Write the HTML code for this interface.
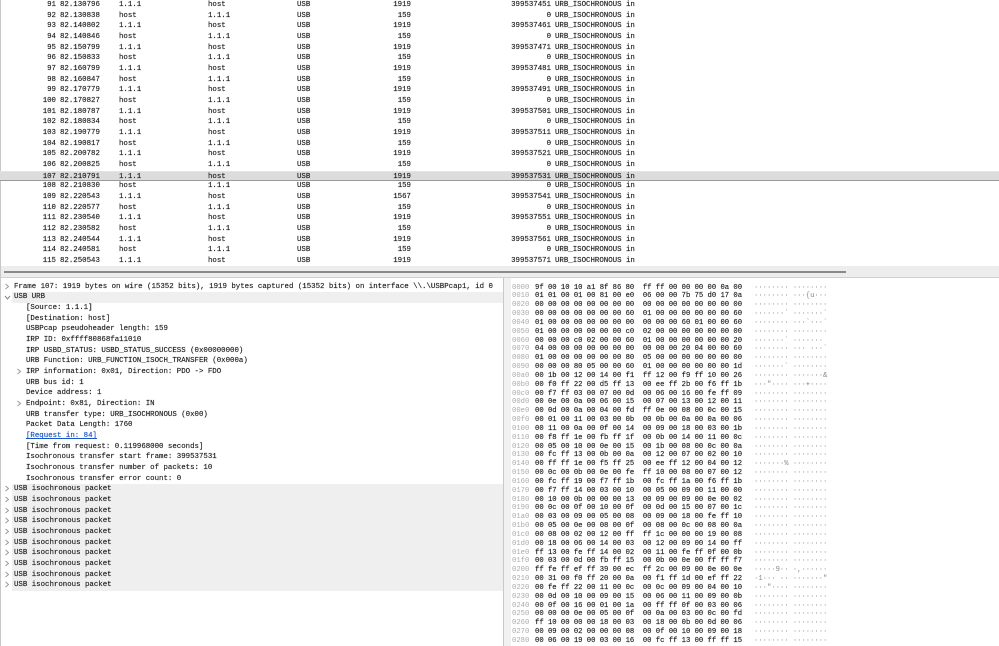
<!DOCTYPE html>
<html><head><meta charset="utf-8"><style>
body{margin:0;width:999px;height:646px;overflow:hidden;background:#fff;position:relative;font-family:"Liberation Mono",monospace;color:#111;-webkit-text-stroke:0.15px #333}
.r{position:absolute;left:0;width:999px;height:10.67px;font-size:7.4px;line-height:10.67px;white-space:pre}
.r span{position:absolute;top:0}
.sel{background:#dcdcdc;border-top:1px solid #e4e4e4;border-bottom:1px solid #9a9a9a;box-sizing:border-box}
.d{position:absolute;left:0;width:503px;height:10.67px;font-size:7.4px;line-height:10.67px;white-space:pre}
.d .t{position:absolute;top:0}
.g{background:#efefef}
.h{position:absolute;left:504px;height:8.83px;font-size:7.2px;line-height:8.83px;white-space:pre}
.h .o{position:absolute;left:8px;color:#aaa;-webkit-text-stroke:0}
.h .b{position:absolute;left:31px}
.h .a{position:absolute;left:250px;color:#888;-webkit-text-stroke:0}
.chev{position:absolute;top:1px;width:6px;height:7px;display:block}
</style></head><body>
<div style="position:absolute;left:0;top:0;width:1px;height:646px;background:#c8c8c8"></div>
<div style="position:absolute;left:1px;top:266px;width:998px;height:11px;background:#ededed"></div>
<div style="position:absolute;left:4px;top:271px;width:842px;height:2px;background:#8a8a8a"></div>
<div style="position:absolute;left:0;top:277px;width:999px;height:1px;background:#d0d0d0"></div>
<div style="position:absolute;left:503px;top:278px;width:1px;height:368px;background:#c8c8c8"></div>
<div style="position:absolute;left:504px;top:278px;width:7px;height:368px;background:#f1f1f1"></div>

<div class="r" style="top:0px"><span style="right:943px">91</span><span style="left:60px">82.130796</span><span style="left:119px">1.1.1</span><span style="left:208px">host</span><span style="left:297px">USB</span><span style="right:588px">1919</span><span style="right:448px">399537451</span><span style="left:555px">URB_ISOCHRONOUS in</span></div>
<div class="r" style="top:10.67px"><span style="right:943px">92</span><span style="left:60px">82.130838</span><span style="left:119px">host</span><span style="left:208px">1.1.1</span><span style="left:297px">USB</span><span style="right:588px">159</span><span style="right:448px">0</span><span style="left:555px">URB_ISOCHRONOUS in</span></div>
<div class="r" style="top:21.34px"><span style="right:943px">93</span><span style="left:60px">82.140802</span><span style="left:119px">1.1.1</span><span style="left:208px">host</span><span style="left:297px">USB</span><span style="right:588px">1919</span><span style="right:448px">399537461</span><span style="left:555px">URB_ISOCHRONOUS in</span></div>
<div class="r" style="top:32.01px"><span style="right:943px">94</span><span style="left:60px">82.140846</span><span style="left:119px">host</span><span style="left:208px">1.1.1</span><span style="left:297px">USB</span><span style="right:588px">159</span><span style="right:448px">0</span><span style="left:555px">URB_ISOCHRONOUS in</span></div>
<div class="r" style="top:42.68px"><span style="right:943px">95</span><span style="left:60px">82.150799</span><span style="left:119px">1.1.1</span><span style="left:208px">host</span><span style="left:297px">USB</span><span style="right:588px">1919</span><span style="right:448px">399537471</span><span style="left:555px">URB_ISOCHRONOUS in</span></div>
<div class="r" style="top:53.35px"><span style="right:943px">96</span><span style="left:60px">82.150833</span><span style="left:119px">host</span><span style="left:208px">1.1.1</span><span style="left:297px">USB</span><span style="right:588px">159</span><span style="right:448px">0</span><span style="left:555px">URB_ISOCHRONOUS in</span></div>
<div class="r" style="top:64.02px"><span style="right:943px">97</span><span style="left:60px">82.160799</span><span style="left:119px">1.1.1</span><span style="left:208px">host</span><span style="left:297px">USB</span><span style="right:588px">1919</span><span style="right:448px">399537481</span><span style="left:555px">URB_ISOCHRONOUS in</span></div>
<div class="r" style="top:74.69px"><span style="right:943px">98</span><span style="left:60px">82.160847</span><span style="left:119px">host</span><span style="left:208px">1.1.1</span><span style="left:297px">USB</span><span style="right:588px">159</span><span style="right:448px">0</span><span style="left:555px">URB_ISOCHRONOUS in</span></div>
<div class="r" style="top:85.36px"><span style="right:943px">99</span><span style="left:60px">82.170779</span><span style="left:119px">1.1.1</span><span style="left:208px">host</span><span style="left:297px">USB</span><span style="right:588px">1919</span><span style="right:448px">399537491</span><span style="left:555px">URB_ISOCHRONOUS in</span></div>
<div class="r" style="top:96.03px"><span style="right:943px">100</span><span style="left:60px">82.170827</span><span style="left:119px">host</span><span style="left:208px">1.1.1</span><span style="left:297px">USB</span><span style="right:588px">159</span><span style="right:448px">0</span><span style="left:555px">URB_ISOCHRONOUS in</span></div>
<div class="r" style="top:106.7px"><span style="right:943px">101</span><span style="left:60px">82.180787</span><span style="left:119px">1.1.1</span><span style="left:208px">host</span><span style="left:297px">USB</span><span style="right:588px">1919</span><span style="right:448px">399537501</span><span style="left:555px">URB_ISOCHRONOUS in</span></div>
<div class="r" style="top:117.37px"><span style="right:943px">102</span><span style="left:60px">82.180834</span><span style="left:119px">host</span><span style="left:208px">1.1.1</span><span style="left:297px">USB</span><span style="right:588px">159</span><span style="right:448px">0</span><span style="left:555px">URB_ISOCHRONOUS in</span></div>
<div class="r" style="top:128.04px"><span style="right:943px">103</span><span style="left:60px">82.190779</span><span style="left:119px">1.1.1</span><span style="left:208px">host</span><span style="left:297px">USB</span><span style="right:588px">1919</span><span style="right:448px">399537511</span><span style="left:555px">URB_ISOCHRONOUS in</span></div>
<div class="r" style="top:138.71px"><span style="right:943px">104</span><span style="left:60px">82.190817</span><span style="left:119px">host</span><span style="left:208px">1.1.1</span><span style="left:297px">USB</span><span style="right:588px">159</span><span style="right:448px">0</span><span style="left:555px">URB_ISOCHRONOUS in</span></div>
<div class="r" style="top:149.38px"><span style="right:943px">105</span><span style="left:60px">82.200782</span><span style="left:119px">1.1.1</span><span style="left:208px">host</span><span style="left:297px">USB</span><span style="right:588px">1919</span><span style="right:448px">399537521</span><span style="left:555px">URB_ISOCHRONOUS in</span></div>
<div class="r" style="top:160.05px"><span style="right:943px">106</span><span style="left:60px">82.200825</span><span style="left:119px">host</span><span style="left:208px">1.1.1</span><span style="left:297px">USB</span><span style="right:588px">159</span><span style="right:448px">0</span><span style="left:555px">URB_ISOCHRONOUS in</span></div>
<div class="r sel" style="top:170.72px"><span style="right:943px">107</span><span style="left:60px">82.210791</span><span style="left:119px">1.1.1</span><span style="left:208px">host</span><span style="left:297px">USB</span><span style="right:588px">1919</span><span style="right:448px">399537531</span><span style="left:555px">URB_ISOCHRONOUS in</span></div>
<div class="r" style="top:181.39px"><span style="right:943px">108</span><span style="left:60px">82.210830</span><span style="left:119px">host</span><span style="left:208px">1.1.1</span><span style="left:297px">USB</span><span style="right:588px">159</span><span style="right:448px">0</span><span style="left:555px">URB_ISOCHRONOUS in</span></div>
<div class="r" style="top:192.06px"><span style="right:943px">109</span><span style="left:60px">82.220543</span><span style="left:119px">1.1.1</span><span style="left:208px">host</span><span style="left:297px">USB</span><span style="right:588px">1567</span><span style="right:448px">399537541</span><span style="left:555px">URB_ISOCHRONOUS in</span></div>
<div class="r" style="top:202.73px"><span style="right:943px">110</span><span style="left:60px">82.220577</span><span style="left:119px">host</span><span style="left:208px">1.1.1</span><span style="left:297px">USB</span><span style="right:588px">159</span><span style="right:448px">0</span><span style="left:555px">URB_ISOCHRONOUS in</span></div>
<div class="r" style="top:213.4px"><span style="right:943px">111</span><span style="left:60px">82.230540</span><span style="left:119px">1.1.1</span><span style="left:208px">host</span><span style="left:297px">USB</span><span style="right:588px">1919</span><span style="right:448px">399537551</span><span style="left:555px">URB_ISOCHRONOUS in</span></div>
<div class="r" style="top:224.07px"><span style="right:943px">112</span><span style="left:60px">82.230582</span><span style="left:119px">host</span><span style="left:208px">1.1.1</span><span style="left:297px">USB</span><span style="right:588px">159</span><span style="right:448px">0</span><span style="left:555px">URB_ISOCHRONOUS in</span></div>
<div class="r" style="top:234.74px"><span style="right:943px">113</span><span style="left:60px">82.240544</span><span style="left:119px">1.1.1</span><span style="left:208px">host</span><span style="left:297px">USB</span><span style="right:588px">1919</span><span style="right:448px">399537561</span><span style="left:555px">URB_ISOCHRONOUS in</span></div>
<div class="r" style="top:245.41px"><span style="right:943px">114</span><span style="left:60px">82.240581</span><span style="left:119px">host</span><span style="left:208px">1.1.1</span><span style="left:297px">USB</span><span style="right:588px">159</span><span style="right:448px">0</span><span style="left:555px">URB_ISOCHRONOUS in</span></div>
<div class="r" style="top:256.08px"><span style="right:943px">115</span><span style="left:60px">82.250543</span><span style="left:119px">1.1.1</span><span style="left:208px">host</span><span style="left:297px">USB</span><span style="right:588px">1919</span><span style="right:448px">399537571</span><span style="left:555px">URB_ISOCHRONOUS in</span></div>

<!-- detail pane -->
<div class="d" style="top:281.7px"><svg class="chev" style="left:4px" viewBox="0 0 6 7"><polyline points="1.5,1 4.5,3.5 1.5,6" fill="none" stroke="#999" stroke-width="1"/></svg><span class="t" style="left:14px">Frame 107: 1919 bytes on wire (15352 bits), 1919 bytes captured (15352 bits) on interface \\.\USBPcap1, id 0</span></div>
<div class="d" style="top:292.4px"><div class="g" style="position:absolute;left:12px;right:0;top:0;bottom:0"></div><svg class="chev" style="left:4px;top:3px;width:7px;height:5px" viewBox="0 0 7 5"><polyline points="1,1 3.5,4 6,1" fill="none" stroke="#888" stroke-width="1"/></svg><span class="t" style="left:14px">USB URB</span></div>
<div class="d" style="top:303.0px"><span class="t" style="left:26px">[Source: 1.1.1]</span></div>
<div class="d" style="top:313.7px"><span class="t" style="left:26px">[Destination: host]</span></div>
<div class="d" style="top:324.4px"><span class="t" style="left:26px">USBPcap pseudoheader length: 159</span></div>
<div class="d" style="top:335.0px"><span class="t" style="left:26px">IRP ID: 0xffff80868fa11010</span></div>
<div class="d" style="top:345.7px"><span class="t" style="left:26px">IRP USBD_STATUS: USBD_STATUS_SUCCESS (0x00000000)</span></div>
<div class="d" style="top:356.4px"><span class="t" style="left:26px">URB Function: URB_FUNCTION_ISOCH_TRANSFER (0x000a)</span></div>
<div class="d" style="top:367.1px"><svg class="chev" style="left:16px" viewBox="0 0 6 7"><polyline points="1.5,1 4.5,3.5 1.5,6" fill="none" stroke="#999" stroke-width="1"/></svg><span class="t" style="left:26px">IRP information: 0x01, Direction: PDO -&gt; FDO</span></div>
<div class="d" style="top:377.7px"><span class="t" style="left:26px">URB bus id: 1</span></div>
<div class="d" style="top:388.4px"><span class="t" style="left:26px">Device address: 1</span></div>
<div class="d" style="top:399.1px"><svg class="chev" style="left:16px" viewBox="0 0 6 7"><polyline points="1.5,1 4.5,3.5 1.5,6" fill="none" stroke="#999" stroke-width="1"/></svg><span class="t" style="left:26px">Endpoint: 0x81, Direction: IN</span></div>
<div class="d" style="top:409.7px"><span class="t" style="left:26px">URB transfer type: URB_ISOCHRONOUS (0x00)</span></div>
<div class="d" style="top:420.4px"><span class="t" style="left:26px">Packet Data Length: 1760</span></div>
<div class="d" style="top:431.1px"><span class="t" style="left:26px;color:#1a55c8;-webkit-text-stroke:0.15px #1a55c8;text-decoration:underline">[Request in: 84]</span></div>
<div class="d" style="top:441.7px"><span class="t" style="left:26px">[Time from request: 0.119968000 seconds]</span></div>
<div class="d" style="top:452.4px"><span class="t" style="left:26px">Isochronous transfer start frame: 399537531</span></div>
<div class="d" style="top:463.1px"><span class="t" style="left:26px">Isochronous transfer number of packets: 10</span></div>
<div class="d" style="top:473.8px"><span class="t" style="left:26px">Isochronous transfer error count: 0</span></div>
<div style="position:absolute;left:12px;top:484.4px;width:491px;height:106.7px;background:#efefef"></div>
<div class="d" style="top:484.4px"><svg class="chev" style="left:4px" viewBox="0 0 6 7"><polyline points="1.5,1 4.5,3.5 1.5,6" fill="none" stroke="#999" stroke-width="1"/></svg><span class="t" style="left:14px">USB isochronous packet</span></div>
<div class="d" style="top:495.1px"><svg class="chev" style="left:4px" viewBox="0 0 6 7"><polyline points="1.5,1 4.5,3.5 1.5,6" fill="none" stroke="#999" stroke-width="1"/></svg><span class="t" style="left:14px">USB isochronous packet</span></div>
<div class="d" style="top:505.8px"><svg class="chev" style="left:4px" viewBox="0 0 6 7"><polyline points="1.5,1 4.5,3.5 1.5,6" fill="none" stroke="#999" stroke-width="1"/></svg><span class="t" style="left:14px">USB isochronous packet</span></div>
<div class="d" style="top:516.4px"><svg class="chev" style="left:4px" viewBox="0 0 6 7"><polyline points="1.5,1 4.5,3.5 1.5,6" fill="none" stroke="#999" stroke-width="1"/></svg><span class="t" style="left:14px">USB isochronous packet</span></div>
<div class="d" style="top:527.1px"><svg class="chev" style="left:4px" viewBox="0 0 6 7"><polyline points="1.5,1 4.5,3.5 1.5,6" fill="none" stroke="#999" stroke-width="1"/></svg><span class="t" style="left:14px">USB isochronous packet</span></div>
<div class="d" style="top:537.8px"><svg class="chev" style="left:4px" viewBox="0 0 6 7"><polyline points="1.5,1 4.5,3.5 1.5,6" fill="none" stroke="#999" stroke-width="1"/></svg><span class="t" style="left:14px">USB isochronous packet</span></div>
<div class="d" style="top:548.4px"><svg class="chev" style="left:4px" viewBox="0 0 6 7"><polyline points="1.5,1 4.5,3.5 1.5,6" fill="none" stroke="#999" stroke-width="1"/></svg><span class="t" style="left:14px">USB isochronous packet</span></div>
<div class="d" style="top:559.1px"><svg class="chev" style="left:4px" viewBox="0 0 6 7"><polyline points="1.5,1 4.5,3.5 1.5,6" fill="none" stroke="#999" stroke-width="1"/></svg><span class="t" style="left:14px">USB isochronous packet</span></div>
<div class="d" style="top:569.8px"><svg class="chev" style="left:4px" viewBox="0 0 6 7"><polyline points="1.5,1 4.5,3.5 1.5,6" fill="none" stroke="#999" stroke-width="1"/></svg><span class="t" style="left:14px">USB isochronous packet</span></div>
<div class="d" style="top:580.4px"><svg class="chev" style="left:4px" viewBox="0 0 6 7"><polyline points="1.5,1 4.5,3.5 1.5,6" fill="none" stroke="#999" stroke-width="1"/></svg><span class="t" style="left:14px">USB isochronous packet</span></div>

<!-- hex pane -->
<div class="h" style="top:283.6px"><span class="o">0000</span><span class="b">9f 00 10 10 a1 8f 86 80  ff ff 00 00 00 00 0a 00</span><span class="a">········ ········</span></div>
<div class="h" style="top:292.4px"><span class="o">0010</span><span class="b">01 01 00 01 00 81 00 e0  06 00 00 7b 75 d0 17 0a</span><span class="a">········ ···{u···</span></div>
<div class="h" style="top:301.3px"><span class="o">0020</span><span class="b">00 00 00 00 00 00 00 00  00 00 00 00 00 00 00 00</span><span class="a">········ ········</span></div>
<div class="h" style="top:310.1px"><span class="o">0030</span><span class="b">00 00 00 00 00 00 00 60  01 00 00 00 00 00 00 60</span><span class="a">·······` ·······`</span></div>
<div class="h" style="top:318.9px"><span class="o">0040</span><span class="b">01 00 00 00 00 00 00 00  00 00 00 60 01 00 00 60</span><span class="a">········ ···`···`</span></div>
<div class="h" style="top:327.8px"><span class="o">0050</span><span class="b">01 00 00 00 00 00 00 c0  02 00 00 00 00 00 00 00</span><span class="a">········ ········</span></div>
<div class="h" style="top:336.6px"><span class="o">0060</span><span class="b">00 00 00 c0 02 00 00 60  01 00 00 00 00 00 00 20</span><span class="a">·······` ······· </span></div>
<div class="h" style="top:345.4px"><span class="o">0070</span><span class="b">04 00 00 00 00 00 00 00  00 00 00 20 04 00 00 60</span><span class="a">········ ··· ···`</span></div>
<div class="h" style="top:354.2px"><span class="o">0080</span><span class="b">01 00 00 00 00 00 00 80  05 00 00 00 00 00 00 00</span><span class="a">········ ········</span></div>
<div class="h" style="top:363.1px"><span class="o">0090</span><span class="b">00 00 00 80 05 00 00 60  01 00 00 00 00 00 00 1d</span><span class="a">·······` ········</span></div>
<div class="h" style="top:371.9px"><span class="o">00a0</span><span class="b">00 1b 00 12 00 14 00 f1  ff 12 00 f9 ff 10 00 26</span><span class="a">········ ·······&amp;</span></div>
<div class="h" style="top:380.7px"><span class="o">00b0</span><span class="b">00 f0 ff 22 00 d5 ff 13  00 ee ff 2b 00 f6 ff 1b</span><span class="a">···"···· ···+····</span></div>
<div class="h" style="top:389.6px"><span class="o">00c0</span><span class="b">00 f7 ff 03 00 07 00 0d  00 06 00 16 00 fe ff 09</span><span class="a">········ ········</span></div>
<div class="h" style="top:398.4px"><span class="o">00d0</span><span class="b">00 0e 00 0a 00 06 00 15  00 07 00 13 00 12 00 11</span><span class="a">········ ········</span></div>
<div class="h" style="top:407.2px"><span class="o">00e0</span><span class="b">00 0d 00 0a 00 04 00 fd  ff 0e 00 08 00 0c 00 15</span><span class="a">········ ········</span></div>
<div class="h" style="top:416.1px"><span class="o">00f0</span><span class="b">00 01 00 11 00 03 00 0b  00 0b 00 0a 00 0a 00 06</span><span class="a">········ ········</span></div>
<div class="h" style="top:424.9px"><span class="o">0100</span><span class="b">00 11 00 0a 00 0f 00 14  00 09 00 18 00 03 00 1b</span><span class="a">········ ········</span></div>
<div class="h" style="top:433.7px"><span class="o">0110</span><span class="b">00 f8 ff 1e 00 fb ff 1f  00 0b 00 14 00 11 00 0c</span><span class="a">········ ········</span></div>
<div class="h" style="top:442.5px"><span class="o">0120</span><span class="b">00 05 00 10 00 0e 00 15  00 1b 00 08 00 0c 00 0a</span><span class="a">········ ········</span></div>
<div class="h" style="top:451.4px"><span class="o">0130</span><span class="b">00 fc ff 13 00 0b 00 0a  00 12 00 07 00 02 00 10</span><span class="a">········ ········</span></div>
<div class="h" style="top:460.2px"><span class="o">0140</span><span class="b">00 ff ff 1e 00 f5 ff 25  00 ee ff 12 00 04 00 12</span><span class="a">·······% ········</span></div>
<div class="h" style="top:469.0px"><span class="o">0150</span><span class="b">00 0c 00 0b 00 0e 00 fe  ff 10 00 08 00 07 00 12</span><span class="a">········ ········</span></div>
<div class="h" style="top:477.9px"><span class="o">0160</span><span class="b">00 fc ff 19 00 f7 ff 1b  00 fc ff 1a 00 f6 ff 1b</span><span class="a">········ ········</span></div>
<div class="h" style="top:486.7px"><span class="o">0170</span><span class="b">00 f7 ff 14 00 03 00 10  00 05 00 09 00 11 00 00</span><span class="a">········ ········</span></div>
<div class="h" style="top:495.5px"><span class="o">0180</span><span class="b">00 10 00 0b 00 00 00 13  00 09 00 09 00 0e 00 02</span><span class="a">········ ········</span></div>
<div class="h" style="top:504.4px"><span class="o">0190</span><span class="b">00 0c 00 0f 00 10 00 0f  00 0d 00 15 00 07 00 1c</span><span class="a">········ ········</span></div>
<div class="h" style="top:513.2px"><span class="o">01a0</span><span class="b">00 03 00 09 00 05 00 08  00 09 00 18 00 fe ff 10</span><span class="a">········ ········</span></div>
<div class="h" style="top:522.0px"><span class="o">01b0</span><span class="b">00 05 00 0e 00 08 00 0f  00 08 00 0c 00 08 00 0a</span><span class="a">········ ········</span></div>
<div class="h" style="top:530.8px"><span class="o">01c0</span><span class="b">00 08 00 02 00 12 00 ff  ff 1c 00 00 00 19 00 08</span><span class="a">········ ········</span></div>
<div class="h" style="top:539.7px"><span class="o">01d0</span><span class="b">00 18 00 06 00 14 00 03  00 12 00 09 00 14 00 ff</span><span class="a">········ ········</span></div>
<div class="h" style="top:548.5px"><span class="o">01e0</span><span class="b">ff 13 00 fe ff 14 00 02  00 11 00 fe ff 0f 00 0b</span><span class="a">········ ········</span></div>
<div class="h" style="top:557.3px"><span class="o">01f0</span><span class="b">00 03 00 0d 00 fb ff 15  00 0b 00 0e 00 ff ff f7</span><span class="a">········ ········</span></div>
<div class="h" style="top:566.2px"><span class="o">0200</span><span class="b">ff fe ff ef ff 39 00 ec  ff 2c 00 09 00 0e 00 0e</span><span class="a">·····9·· ·,······</span></div>
<div class="h" style="top:575.0px"><span class="o">0210</span><span class="b">00 31 00 f0 ff 20 00 0a  00 f1 ff 1d 00 ef ff 22</span><span class="a">·1··· ·· ·······"</span></div>
<div class="h" style="top:583.8px"><span class="o">0220</span><span class="b">00 fe ff 22 00 11 00 0c  00 0c 00 09 00 04 00 10</span><span class="a">···"···· ········</span></div>
<div class="h" style="top:592.7px"><span class="o">0230</span><span class="b">00 0d 00 10 00 09 00 15  00 06 00 11 00 09 00 0b</span><span class="a">········ ········</span></div>
<div class="h" style="top:601.5px"><span class="o">0240</span><span class="b">00 0f 00 16 00 01 00 1a  00 ff ff 0f 00 03 00 06</span><span class="a">········ ········</span></div>
<div class="h" style="top:610.3px"><span class="o">0250</span><span class="b">00 00 00 0e 00 05 00 0f  00 0a 00 03 00 0c 00 fd</span><span class="a">········ ········</span></div>
<div class="h" style="top:619.1px"><span class="o">0260</span><span class="b">ff 10 00 00 00 18 00 03  00 18 00 0b 00 0d 00 06</span><span class="a">········ ········</span></div>
<div class="h" style="top:628.0px"><span class="o">0270</span><span class="b">00 09 00 02 00 00 00 08  00 0f 00 10 00 09 00 18</span><span class="a">········ ········</span></div>
<div class="h" style="top:636.8px"><span class="o">0280</span><span class="b">00 06 00 19 00 03 00 16  00 fc ff 13 00 ff ff 15</span><span class="a">········ ········</span></div>
</body></html>
